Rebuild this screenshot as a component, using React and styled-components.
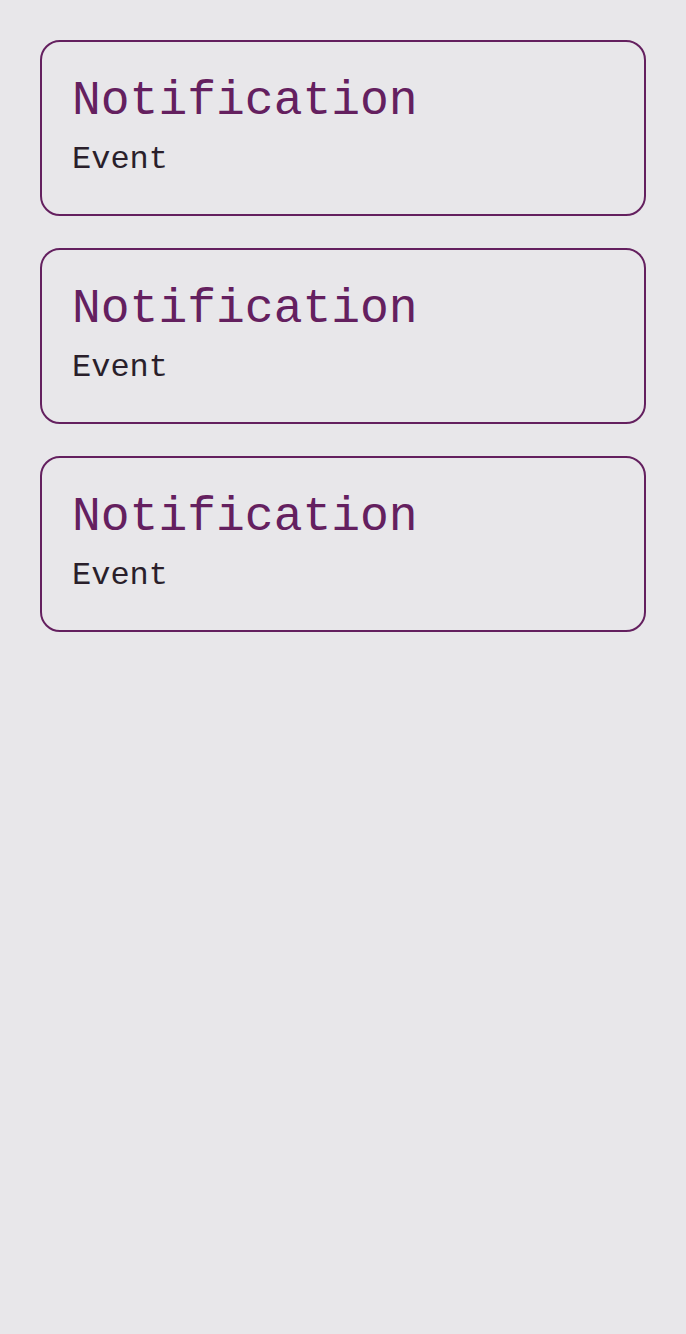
import styled, { createGlobalStyle } from 'styled-components';

const GlobalStyle = createGlobalStyle`
  body {
    margin: 0;
    background: #e8e7ea;
    font-family: "Liberation Mono", "DejaVu Sans Mono", monospace;
  }
`;

const Page = styled.div`
  min-height: 1334px;
  padding: 40px;
  box-sizing: border-box;
  display: flex;
  flex-direction: column;
  gap: 32px;
`;

const Card = styled.div`
  border: 2px solid #64205f;
  border-radius: 20px;
  padding: 32px 30px 36px;
`;

const Title = styled.div`
  font-size: 48px;
  line-height: 54px;
  color: #64205f;
  margin-bottom: 14px;
`;

const Subtitle = styled.div`
  font-size: 32px;
  line-height: 36px;
  color: #2a1f2b;
`;

const items = [1, 2, 3];

export default function App() {
  return (
    <>
      <GlobalStyle />
      <Page>
        {items.map((i) => (
          <Card key={i}>
            <Title>Notification</Title>
            <Subtitle>Event</Subtitle>
          </Card>
        ))}
      </Page>
    </>
  );
}
